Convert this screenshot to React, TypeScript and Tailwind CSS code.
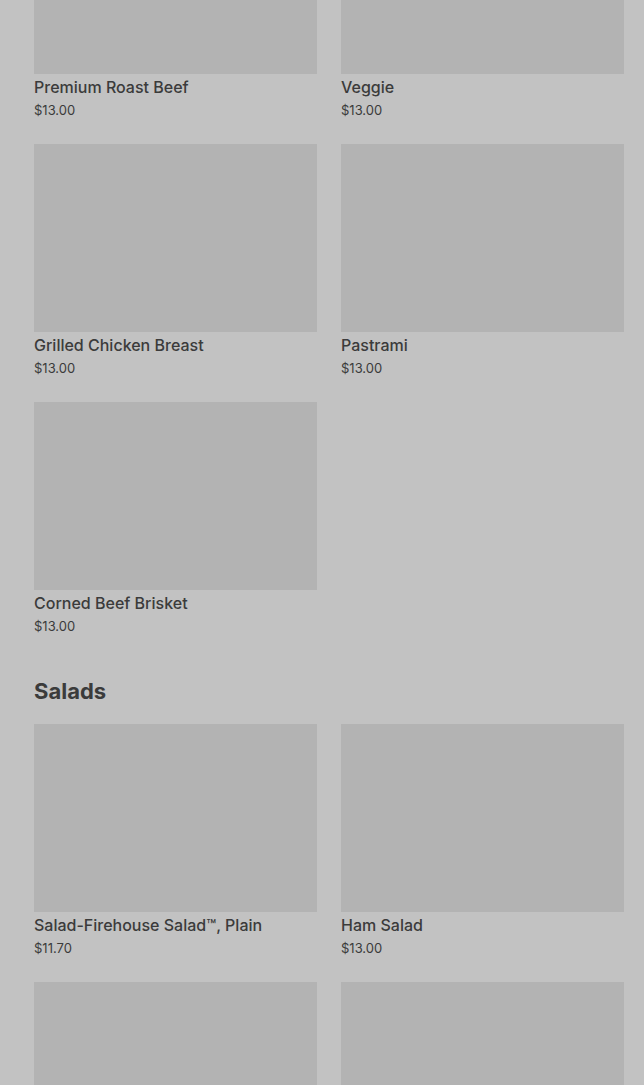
const sandwiches = [
  { name: 'Premium Roast Beef', price: '$13.00' },
  { name: 'Veggie', price: '$13.00' },
  { name: 'Grilled Chicken Breast', price: '$13.00' },
  { name: 'Pastrami', price: '$13.00' },
  { name: 'Corned Beef Brisket', price: '$13.00' },
];

const salads = [
  { name: 'Salad-Firehouse Salad™, Plain', price: '$11.70' },
  { name: 'Ham Salad', price: '$13.00' },
];

function ItemCard({ name, price }: { name: string; price: string }) {
  return (
    <div className="flex flex-col">
      <div className="h-[188px] w-full bg-[#b3b3b3]" />
      <p className="mt-[1px] text-[16px] leading-[24px] font-medium text-[#3b3b3b]">{name}</p>
      <p className="mt-[1px] text-[13px] leading-[20px] text-[#3b3b3b]">{price}</p>
    </div>
  );
}

export default function App() {
  return (
    <div
      className="h-[1085px] overflow-hidden bg-[#c2c2c2]"
      style={{ fontFamily: 'Inter, "Noto Sans", sans-serif' }}
    >
      <div className="-mt-[114px] pl-[34px] pr-[20px]">
        <div className="grid grid-cols-2 gap-x-[24px] gap-y-[24px]">
          {sandwiches.map((item) => (
            <ItemCard key={item.name} {...item} />
          ))}
        </div>

        <h2 className="mt-[39px] text-[22px] leading-[32px] font-bold text-[#3b3b3b]">Salads</h2>

        <div className="mt-[17px] grid grid-cols-2 gap-x-[24px] gap-y-[24px]">
          {salads.map((item) => (
            <ItemCard key={item.name} {...item} />
          ))}
          {/* next row continues below the fold */}
          <div className="h-[188px] bg-[#b3b3b3]" />
          <div className="h-[188px] bg-[#b3b3b3]" />
        </div>
      </div>
    </div>
  );
}
